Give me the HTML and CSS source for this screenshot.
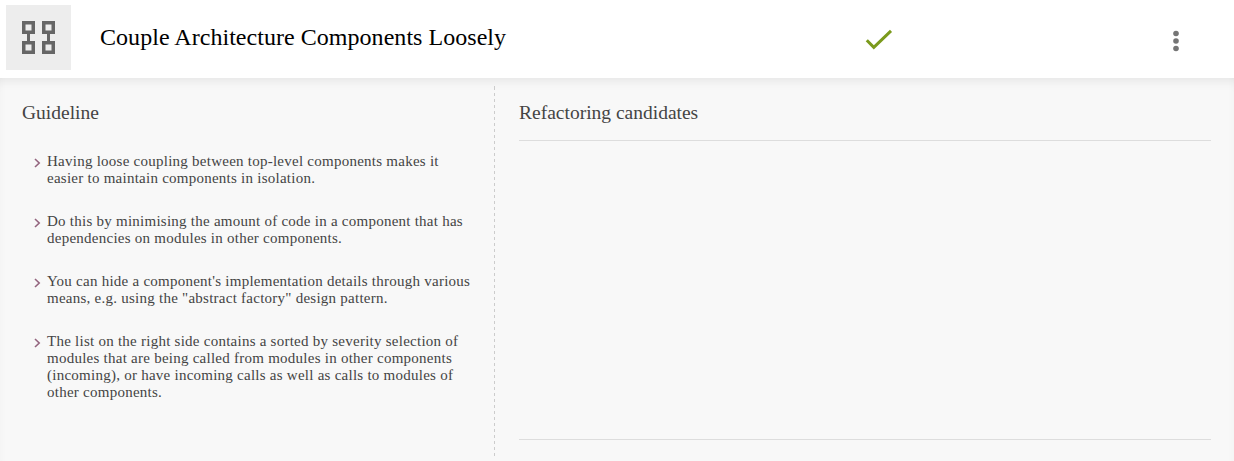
FILE: index.html
```html
<!DOCTYPE html>
<html lang="en">
<head>
<meta charset="utf-8">
<title>Couple Architecture Components Loosely</title>
<link rel="stylesheet" href="styles.css">
</head>
<body>
<header class="header">
  <div class="tile">
    <svg width="33" height="33" viewBox="0 0 33 33" fill="none" stroke="#666">
      <path stroke-width="3.5" d="M1.75 1.75h9.5v9.5h-9.5zM1.75 21.75h9.5v9.5h-9.5zM21.75 1.75h9.5v9.5h-9.5zM21.75 21.75h9.5v9.5h-9.5z"/>
      <path stroke-width="3" d="M6.5 12v9M26.5 12v9"/>
    </svg>
  </div>
  <h1 class="title">Couple Architecture Components Loosely</h1>
  <svg class="check" width="28" height="22" viewBox="0 0 28 22" fill="none" stroke="#7b9a1c" stroke-width="3"><path d="M1.8 11.3l7 7L26 1.9"/></svg>
  <svg class="menu" width="6" height="22" viewBox="0 0 6 22" fill="#757575"><circle cx="3" cy="3.5" r="2.8"/><circle cx="3" cy="11" r="2.8"/><circle cx="3" cy="18.5" r="2.8"/></svg>
</header>
<main class="panel">
  <section class="guideline">
    <h2 class="heading">Guideline</h2>
    <ul class="list">
      <li class="item"><svg class="chevron" width="7" height="10" viewBox="0 0 7 10"><path d="M1 1l4.2 4L1 9"/></svg><p class="text">Having loose coupling between top-level components makes it<br>easier to maintain components in isolation.</p></li>
      <li class="item"><svg class="chevron" width="7" height="10" viewBox="0 0 7 10"><path d="M1 1l4.2 4L1 9"/></svg><p class="text">Do this by minimising the amount of code in a component that has<br>dependencies on modules in other components.</p></li>
      <li class="item"><svg class="chevron" width="7" height="10" viewBox="0 0 7 10"><path d="M1 1l4.2 4L1 9"/></svg><p class="text">You can hide a component's implementation details through various<br>means, e.g. using the "abstract factory" design pattern.</p></li>
      <li class="item"><svg class="chevron" width="7" height="10" viewBox="0 0 7 10"><path d="M1 1l4.2 4L1 9"/></svg><p class="text">The list on the right side contains a sorted by severity selection of<br>modules that are being called from modules in other components<br>(incoming), or have incoming calls as well as calls to modules of<br>other components.</p></li>
    </ul>
  </section>
  <div class="divider"></div>
  <section class="candidates">
    <h2 class="heading">Refactoring candidates</h2>
    <div class="results"></div>
  </section>
</main>
</body>
</html>
```

FILE: styles.css
```css
* { box-sizing: border-box; margin: 0; padding: 0; }
body {
  width: 1234px;
  height: 461px;
  overflow: hidden;
  background: #fff;
  font-family: "Liberation Serif", "Times New Roman", serif;
  color: #444;
}
svg { display: block; flex: none; }
.header { display: flex; height: 78px; padding: 5px 55px 0 6px; }
.tile {
  display: flex;
  width: 65px;
  height: 65px;
  padding: 16px;
  background: #ededed;
}
.title {
  width: 766px;
  padding: 18px 0 0 29px;
  font-size: 24px;
  line-height: 28px;
  font-weight: 400;
  letter-spacing: 0.04px;
  color: #000;
  white-space: nowrap;
}
.check { margin: 24px 0 0 28px; }
.menu { margin: 25px 0 0 auto; }
.panel {
  display: flex;
  height: 383px;
  background: #f8f8f8;
  box-shadow: inset 0 12px 12px -10px rgba(0, 0, 0, 0.09), inset 8px 0 8px -8px rgba(0, 0, 0, 0.03), inset -8px 0 8px -8px rgba(0, 0, 0, 0.03);
}
.guideline { width: 494px; padding: 23px 0 0 22px; }
.heading { font-size: 19.5px; line-height: 24px; font-weight: 400; white-space: nowrap; }
.list { padding: 28px 0 0 12px; list-style: none; }
.item { display: flex; gap: 6px; margin-bottom: 26px; }
.chevron { margin-top: 5px; fill: none; stroke: #94657f; stroke-width: 1.6; }
.text { font-size: 15px; line-height: 17px; letter-spacing: 0.25px; white-space: nowrap; }
.divider {
  width: 1px;
  height: 370px;
  margin-top: 8px;
  border-top: 1px solid #ccc;
  background: repeating-linear-gradient(#ccc 0 3px, transparent 3px 6px);
  background-clip: padding-box;
}
.candidates { width: 716px; padding: 23px 0 0 24px; }
.results { height: 300px; margin-top: 15px; border: solid #ddd; border-width: 1px 0; }
```
